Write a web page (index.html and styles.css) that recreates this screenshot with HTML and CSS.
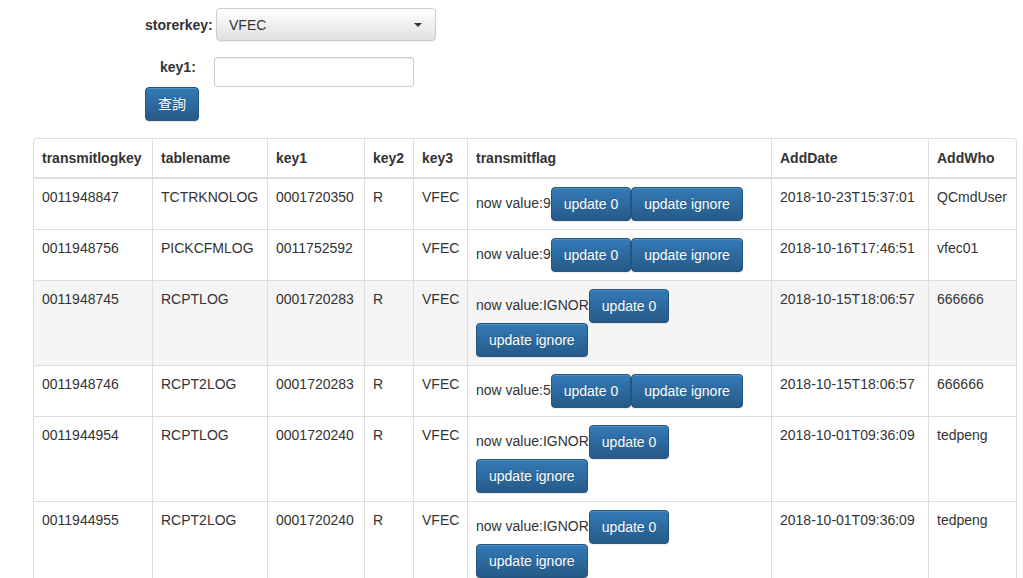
FILE: index.html
```html
<!DOCTYPE html>
<html>
<head>
<meta charset="utf-8">
<link rel="stylesheet" href="styles.css">
</head>
<body>
<div class="form">
  <div class="row row-store">
    <label class="lbl lbl-store">storerkey:</label>
    <div class="select"><span>VFEC</span><span class="caret"></span></div>
  </div>
  <div class="row row-key">
    <label class="lbl lbl-key">key1:</label>
    <input class="input" type="text">
  </div>
  <button class="btn btn-primary btn-query">查詢</button>
</div>
<table class="grid">
  <colgroup>
    <col style="width:118px"><col style="width:115px"><col style="width:97px"><col style="width:49px"><col style="width:54px"><col style="width:304px"><col style="width:157px"><col style="width:88px">
  </colgroup>
  <thead>
    <tr><th>transmitlogkey</th><th>tablename</th><th>key1</th><th>key2</th><th>key3</th><th>transmitflag</th><th>AddDate</th><th>AddWho</th></tr>
  </thead>
  <tbody>
    <tr><td>0011948847</td><td>TCTRKNOLOG</td><td>0001720350</td><td>R</td><td>VFEC</td><td class="flag">now value:9<button class="btn btn-primary">update 0</button><button class="btn btn-primary">update ignore</button></td><td>2018-10-23T15:37:01</td><td>QCmdUser</td></tr>
    <tr><td>0011948756</td><td>PICKCFMLOG</td><td>0011752592</td><td></td><td>VFEC</td><td class="flag">now value:9<button class="btn btn-primary">update 0</button><button class="btn btn-primary">update ignore</button></td><td>2018-10-16T17:46:51</td><td>vfec01</td></tr>
    <tr class="hl"><td>0011948745</td><td>RCPTLOG</td><td>0001720283</td><td>R</td><td>VFEC</td><td class="flag">now value:IGNOR<button class="btn btn-primary">update 0</button><button class="btn btn-primary">update ignore</button></td><td>2018-10-15T18:06:57</td><td>666666</td></tr>
    <tr><td>0011948746</td><td>RCPT2LOG</td><td>0001720283</td><td>R</td><td>VFEC</td><td class="flag">now value:5<button class="btn btn-primary">update 0</button><button class="btn btn-primary">update ignore</button></td><td>2018-10-15T18:06:57</td><td>666666</td></tr>
    <tr><td>0011944954</td><td>RCPTLOG</td><td>0001720240</td><td>R</td><td>VFEC</td><td class="flag">now value:IGNOR<button class="btn btn-primary">update 0</button><button class="btn btn-primary">update ignore</button></td><td>2018-10-01T09:36:09</td><td>tedpeng</td></tr>
    <tr><td>0011944955</td><td>RCPT2LOG</td><td>0001720240</td><td>R</td><td>VFEC</td><td class="flag">now value:IGNOR<button class="btn btn-primary">update 0</button><button class="btn btn-primary">update ignore</button></td><td>2018-10-01T09:36:09</td><td>tedpeng</td></tr>
  </tbody>
</table>
</body>
</html>
```
FILE: styles.css
```css
html, body {
  margin: 0;
  padding: 0;
  background: #fff;
}
body {
  font-family: "Liberation Sans", Arial, "Noto Sans CJK TC", sans-serif;
  font-size: 14px;
  line-height: 20px;
  color: #333;
}
.form {
  padding: 8px 0 0 145px;
}
.row {
  display: flex;
}
.row-store {
  align-items: center;
}
.row-key {
  align-items: flex-start;
  margin-top: 16px;
}
.lbl {
  font-weight: bold;
  display: block;
}
.lbl-store {
  width: 71px;
}
.lbl-key {
  width: 69px;
  padding-left: 15px;
  box-sizing: border-box;
}
.select {
  width: 220px;
  height: 33px;
  box-sizing: border-box;
  border: 1px solid #ccc;
  border-radius: 4px;
  background-image: linear-gradient(to bottom, #fff 0, #e0e0e0 100%);
  box-shadow: inset 0 1px 0 rgba(255,255,255,.15), 0 1px 1px rgba(0,0,0,.075);
  display: flex;
  align-items: center;
  justify-content: space-between;
  padding: 0 12px 0 12px;
  color: #333;
}
.caret {
  width: 0;
  height: 0;
  border-top: 4px solid #333;
  border-left: 4px solid transparent;
  border-right: 4px solid transparent;
  margin-right: 1px;
}
.input {
  width: 200px;
  height: 30px;
  box-sizing: border-box;
  border: 1px solid #ccc;
  border-radius: 3px;
  margin: 0;
  padding: 5px 10px;
  font: inherit;
  box-shadow: inset 0 1px 1px rgba(0,0,0,.075);
}
.btn {
  display: inline-block;
  font-family: "Liberation Sans", Arial, "Noto Sans CJK TC", sans-serif;
  font-size: 14px;
  line-height: 20px;
  padding: 6px 12px;
  border: 1px solid #245580;
  border-radius: 4px;
  margin: 0;
  vertical-align: middle;
  cursor: pointer;
}
.btn-primary {
  color: #fff;
  background-color: #265a88;
  background-image: linear-gradient(to bottom, #337ab7 0, #265a88 100%);
  text-shadow: 0 -1px 0 rgba(0,0,0,.2);
  box-shadow: inset 0 1px 0 rgba(255,255,255,.15), 0 1px 1px rgba(0,0,0,.075);
}
.btn-query {
  height: 34px;
  padding: 6px 12px;
}
.grid {
  margin: 17px 0 0 33px;
  width: 982px;
  table-layout: fixed;
  border-collapse: separate;
  border-spacing: 0;
  border: 1px solid #ddd;
  border-radius: 4px;
}
.grid th, .grid td {
  padding: 8px;
  text-align: left;
  border-left: 1px solid #ddd;
  border-top: 1px solid #ddd;
  white-space: nowrap;
}
.grid th {
  vertical-align: bottom;
  font-weight: bold;
  border-top: 0;
  padding-top: 9px;
  padding-bottom: 9px;
  border-bottom: 1px solid #ddd;
}
.grid td {
  vertical-align: top;
}
.grid th:first-child, .grid td:first-child {
  border-left: 0;
}
.grid td.flag {
  white-space: normal;
}
.grid tr.hl td {
  background: #f5f5f5;
}
```
